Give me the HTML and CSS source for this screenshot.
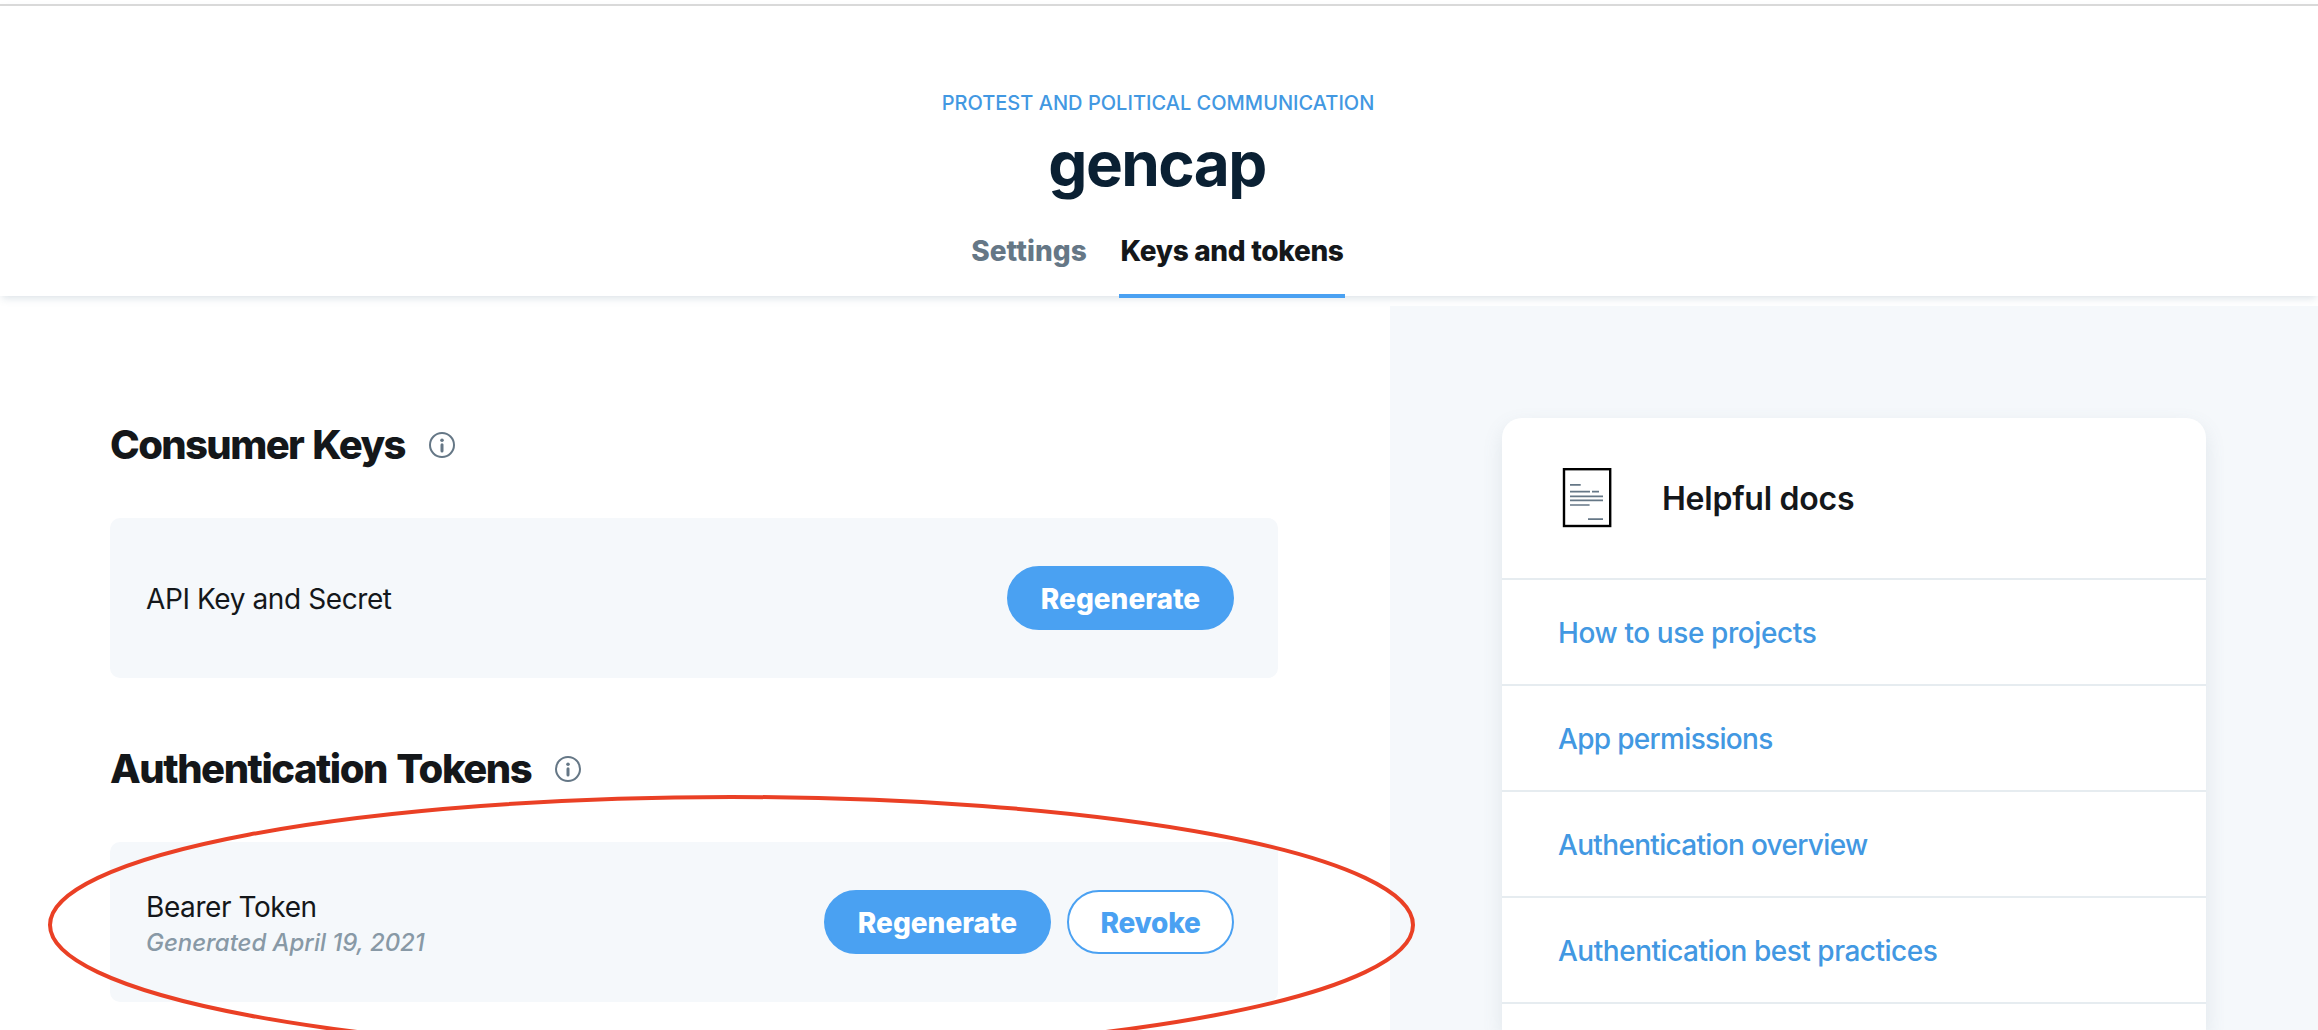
FILE: index.html
```html
<!DOCTYPE html>
<html lang="en">
<head>
<meta charset="utf-8">
<title>gencap - Keys and tokens</title>
<link rel="stylesheet" href="styles.css">
</head>
<body>
<header class="app-header">
  <a class="project-name">PROTEST AND POLITICAL COMMUNICATION</a>
  <h1 class="app-name">gencap</h1>
  <nav class="tabs">
    <a class="tab tab-settings">Settings</a>
    <a class="tab tab-keys">Keys and tokens</a>
  </nav>
</header>
<main class="content">
  <div class="keys">
    <section class="key-section">
      <div class="section-head">
        <h2 class="section-title">Consumer Keys</h2>
        <svg class="info" viewBox="0 0 26 26"><circle cx="13" cy="13" r="12" fill="none" stroke="currentColor" stroke-width="2"/><circle cx="13" cy="8.2" r="1.8" fill="currentColor"/><path d="M13 12.8V19" stroke="currentColor" stroke-width="3" stroke-linecap="round"/></svg>
      </div>
      <div class="key-card">
        <div class="key-info"><p class="key-name key-api">API Key and Secret</p></div>
        <div class="actions"><button class="btn btn-primary">Regenerate</button></div>
      </div>
    </section>
    <section class="key-section">
      <div class="section-head">
        <h2 class="section-title section-auth">Authentication Tokens</h2>
        <svg class="info" viewBox="0 0 26 26"><circle cx="13" cy="13" r="12" fill="none" stroke="currentColor" stroke-width="2"/><circle cx="13" cy="8.2" r="1.8" fill="currentColor"/><path d="M13 12.8V19" stroke="currentColor" stroke-width="3" stroke-linecap="round"/></svg>
      </div>
      <div class="key-card">
        <div class="key-info key-info-dated">
          <p class="key-name">Bearer Token</p>
          <p class="key-date">Generated April 19, 2021</p>
        </div>
        <div class="actions">
          <button class="btn btn-primary">Regenerate</button>
          <button class="btn btn-outline">Revoke</button>
        </div>
      </div>
    </section>
  </div>
  <aside class="sidebar">
    <div class="docs">
      <div class="docs-header">
        <svg class="docs-icon" viewBox="0 0 50 60" fill="none">
          <rect x="2" y="1.2" width="46.2" height="56.8" stroke="#000" stroke-width="2.4"/>
          <path d="M8 16.8H18.7M8 23.7H28M30 23.7H37M8 28.3H41M8 32.4H41M8 37H27.6M26 51.2H41" stroke="#657786" stroke-width="1.7"/>
        </svg>
        <h3 class="docs-title">Helpful docs</h3>
      </div>
      <a class="doc-link link-projects">How to use projects</a>
      <a class="doc-link link-wide">App permissions</a>
      <a class="doc-link link-wide">Authentication overview</a>
      <a class="doc-link link-best">Authentication best practices</a>
      <div class="docs-more"></div>
    </div>
  </aside>
</main>
<svg class="annotation" viewBox="0 0 1370 237"><ellipse cx="684.5" cy="132" rx="681.5" ry="128" fill="none" stroke="#ea4025" stroke-width="4"/></svg>
</body>
</html>
```
FILE: styles.css
```css
* { box-sizing: border-box; }
html { height: 100%; }
body {
  position: relative;
  display: flex;
  flex-direction: column;
  height: 100%;
  margin: 0;
  padding-top: 4px;
  background: #fff;
  color: #14171a;
  font-family: Inter, "Liberation Sans", sans-serif;
}
h1, h2, h3, p { margin: 0; }

.app-header {
  display: flex;
  flex: none;
  flex-direction: column;
  align-items: center;
  height: 292px;
  padding: 85px 2px 0 0;
  border-top: 2px solid #d9d9d9;
  box-shadow: 0 4px 8px -2px rgba(101, 130, 150, 0.24);
}
.project-name {
  color: #4298e2;
  font-size: 20px;
  font-weight: 500;
  line-height: 24px;
  letter-spacing: 0.02px;
}
.app-name {
  margin-top: 13px;
  padding-right: 2px;
  color: #0a2033;
  font-size: 62px;
  font-weight: 700;
  line-height: 72px;
  letter-spacing: -1.6px;
}
.tabs { display: flex; gap: 32px; margin-top: 33px; }
.tab {
  height: 65px;
  font-size: 28px;
  font-weight: 800;
  line-height: 36px;
  text-align: center;
  white-space: nowrap;
}
.tab-settings { width: 116px; color: #657786; letter-spacing: 0.05px; }
.tab-keys { width: 226px; border-bottom: 4px solid #4aa1f2; letter-spacing: -0.32px; }

.content { display: flex; flex: 1; min-height: 0; margin-top: 10px; }
.keys {
  display: flex;
  flex-direction: column;
  gap: 66px;
  width: 1390px;
  padding: 114px 112px 0 110px;
}
.section-head { display: flex; align-items: center; gap: 24px; height: 48px; }
.section-title {
  padding-top: 2px;
  font-size: 40px;
  font-weight: 800;
  line-height: 48px;
  letter-spacing: -1.62px;
  word-spacing: 2px;
}
.section-auth { letter-spacing: -1.48px; }
.info { width: 26px; height: 26px; margin-top: 1px; color: #657786; }
.key-card {
  display: flex;
  align-items: center;
  justify-content: space-between;
  height: 160px;
  margin-top: 50px;
  padding: 0 44px 0 36px;
  border-radius: 10px;
  background: #f5f8fb;
}
.key-info { padding-top: 2px; }
.key-info-dated { padding-top: 4px; }
.key-name { font-size: 28px; line-height: 36px; letter-spacing: -0.42px; }
.key-api { letter-spacing: -0.4px; }
.key-date {
  padding-top: 2px;
  color: #8899a6;
  font-size: 24px;
  font-style: italic;
  font-weight: 500;
  line-height: 32px;
  letter-spacing: -0.05px;
}
.actions { display: flex; gap: 16px; }
.btn {
  height: 64px;
  padding: 2px 0 0;
  border: 2px solid #4aa1f2;
  border-radius: 32px;
  font: 800 28px/36px Inter, "Liberation Sans", sans-serif;
}
.btn-primary { width: 227px; background: #4aa1f2; color: #fff; }
.btn-outline { width: 167px; background: #fff; color: #4aa1f2; letter-spacing: -0.25px; }

.sidebar { display: flex; flex: 1; padding: 112px 112px 0; background: #f5f8fb; }
.docs {
  display: flex;
  flex: 1;
  flex-direction: column;
  border-radius: 20px 20px 0 0;
  background: #fff;
  box-shadow: 0 8px 20px rgba(101, 119, 134, 0.14);
  clip-path: inset(-30px -30px 0);
}
.docs-header {
  display: flex;
  flex: none;
  align-items: center;
  gap: 50px;
  height: 160px;
  padding-left: 60px;
}
.docs-icon { width: 50px; height: 60px; }
.docs-title { padding-top: 2px; font-size: 32px; font-weight: 600; line-height: 40px; letter-spacing: -0.25px; }
.doc-link {
  display: flex;
  flex: none;
  align-items: center;
  height: 106px;
  padding: 2px 0 0 56px;
  border-top: 2px solid #e6ecf0;
  color: #4298e2;
  font-size: 28px;
  font-weight: 500;
}
.link-projects { letter-spacing: -0.4px; }
.link-wide { letter-spacing: -0.68px; }
.link-best { letter-spacing: -0.48px; }
.docs-more { flex: 1; border-top: 2px solid #e6ecf0; }

/* hand-drawn highlight over the bearer token row */
.annotation { position: absolute; top: 793px; left: 47px; width: 1370px; height: 237px; }
```
